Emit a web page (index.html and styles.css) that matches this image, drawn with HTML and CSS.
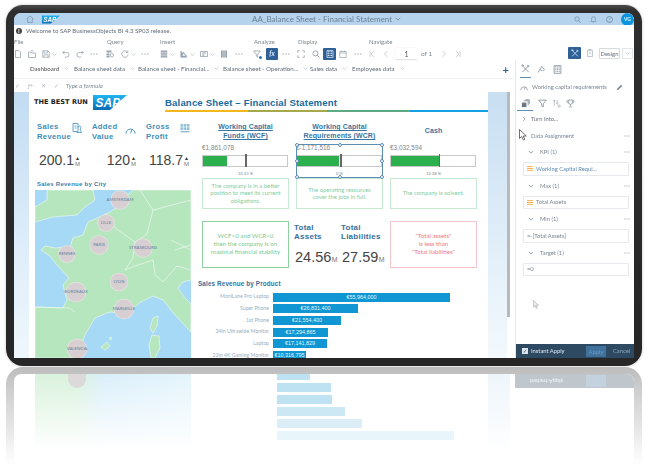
FILE: index.html
```html
<!DOCTYPE html>
<html lang="en">
<head>
<meta charset="utf-8">
<title>AA_Balance Sheet - Financial Statement</title>
<link rel="stylesheet" href="styles.css">
</head>
<body>
<svg class="defs" width="0" height="0" aria-hidden="true">
  <defs>
    <linearGradient id="sapg" x1="0" y1="0" x2="0" y2="1"><stop offset="0" stop-color="#1fb6f2"/><stop offset="1" stop-color="#0a6ab5"/></linearGradient>
    <symbol id="chev" viewBox="0 0 8 8"><path d="M1 2.500 4 5.500 7 2.500" fill="none" stroke="currentColor"/></symbol>
    <symbol id="more" viewBox="0 0 8 8"><path d="M.5 4h1.400M3.300 4h1.400M6.100 4h1.400" fill="none" stroke="currentColor"/></symbol>
    <symbol id="doc" viewBox="0 0 8 8"><path d="M1.500.5h3.500l1.500 1.500v5.500h-5z" fill="none" stroke="currentColor" stroke-width=".8"/></symbol>
    <symbol id="open" viewBox="0 0 8 8"><path d="M.5 2h2.500l1 1h3.500v4.500h-7zM3 .8h2.500" fill="none" stroke="currentColor" stroke-width=".8"/></symbol>
    <symbol id="save" viewBox="0 0 8 8"><path d="M.7.7h5l1.600 1.600v5h-6.600zM2 .7v2.300h3.400v-2.300M2 7.300v-2.500h4v2.500" fill="none" stroke="currentColor" stroke-width=".7"/></symbol>
    <symbol id="undo" viewBox="0 0 8 8"><path d="M2.500.8.800 2.500 2.500 4.200M.8 2.500h4a2.300 2.300 0 0 1 0 4.600h-2" fill="none" stroke="currentColor" stroke-width=".8"/></symbol>
    <symbol id="redo" viewBox="0 0 8 8"><path d="M5.500.8 7.200 2.500 5.500 4.200M7.200 2.500h-4a2.300 2.300 0 0 0 0 4.600h2" fill="none" stroke="currentColor" stroke-width=".8"/></symbol>
    <symbol id="query" viewBox="0 0 8 8"><path d="M.5.500h5v2h-5zM.5 3.500h3v2h-3zM.5 6h3v1.500h-3z" fill="currentColor"/><circle cx="5.800" cy="5.200" r="1.700" fill="none" stroke="currentColor" stroke-width=".8"/></symbol>
    <symbol id="refresh" viewBox="0 0 8 8"><path d="M6.600 2.200a3.200 3.200 0 1 0 .5 2.600M6.800.6v1.900h-1.900" fill="none" stroke="currentColor" stroke-width=".8"/></symbol>
    <symbol id="table" viewBox="0 0 8 8"><path d="M.8.500h6.400v7h-6.400z" fill="currentColor"/><path d="M.8 2.300h6.400M.8 4h6.400M.8 5.700h6.400" stroke="#fff" stroke-width=".5"/></symbol>
    <symbol id="chart" viewBox="0 0 8 8"><path d="M.8 1v6.200h6.400M2 6l1.500-4 1.500 2.500 1.800 1.500z" fill="currentColor" stroke="currentColor" stroke-width=".6"/></symbol>
    <symbol id="img" viewBox="0 0 8 8"><path d="M.5 1.500h7v5h-7z" fill="none" stroke="currentColor" stroke-width=".8"/><path d="M2 3h4M2 5h2.500" stroke="currentColor"/></symbol>
    <symbol id="cols" viewBox="0 0 8 8"><path d="M1 .5h6v7h-6z" fill="currentColor"/><path d="M3 .5v7M5 .5v7" stroke="#fff" stroke-width=".5"/></symbol>
    <symbol id="filter" viewBox="0 0 8 8"><path d="M.6 1h6.800l-2.700 3.200v2.800l-1.400-.8v-2z" fill="none" stroke="currentColor" stroke-width=".8"/></symbol>
    <symbol id="frame" viewBox="0 0 8 8"><path d="M.7 2.700v-2h2M5.300.7h2v2M7.300 5.300v2h-2M2.700 7.300h-2v-2" fill="none" stroke="currentColor" stroke-width=".8"/></symbol>
    <symbol id="search" viewBox="0 0 8 8"><circle cx="3.400" cy="3.400" r="2.500" fill="none" stroke="currentColor" stroke-width=".9"/><path d="M5.200 5.200 7.500 7.500" stroke="currentColor"/></symbol>
    <symbol id="calc" viewBox="0 0 8 8"><path d="M1 .6h6v6.800h-6z" fill="none" stroke="currentColor" stroke-width=".8"/><path d="M2 1.800h4M2 3.700h4M2 5.500h4" stroke="currentColor" stroke-dasharray="1 .5"/></symbol>
    <symbol id="cal" viewBox="0 0 8 8"><path d="M.8 1.500h6.400v6h-6.400zM.8 3h6.400M2.400.5v1.500M5.600.5v1.500" fill="none" stroke="currentColor" stroke-width=".7"/></symbol>
    <symbol id="first" viewBox="0 0 8 8"><path d="M2 1v6M6 1 3 4l3 3" fill="none" stroke="currentColor" stroke-width=".8"/></symbol>
    <symbol id="prev" viewBox="0 0 8 8"><path d="M5.500 1 2.500 4l3 3" fill="none" stroke="currentColor" stroke-width=".8"/></symbol>
    <symbol id="next" viewBox="0 0 8 8"><path d="M2.500 1l3 3-3 3" fill="none" stroke="currentColor" stroke-width=".8"/></symbol>
    <symbol id="last" viewBox="0 0 8 8"><path d="M6 1v6M2 1l3 3-3 3" fill="none" stroke="currentColor" stroke-width=".8"/></symbol>
    <symbol id="tools" viewBox="0 0 10 10"><path d="M1 1.500 8.500 9M9 1.500 1.500 9M1 1l2 .5-1 1zM7.500 1a1.500 1.500 0 0 0 1.500 2" fill="none" stroke="currentColor" stroke-width="1"/></symbol>
    <symbol id="paint" viewBox="0 0 10 10"><path d="M1 8.500 5 2l3.500 3-2 1.500M5 2l1-1M3 5l3 1.500" fill="none" stroke="currentColor" stroke-width=".9"/></symbol>
    <symbol id="clip" viewBox="0 0 8 10"><path d="M1 1.500h6v8h-6zM2.800 1.500v-1h2.400v1" fill="none" stroke="currentColor" stroke-width=".8"/><path d="M2.500 4h3M2.500 6h3" stroke="currentColor" stroke-width=".6"/></symbol>
    <symbol id="gauge" viewBox="0 0 12 10"><path d="M1 9a5 5 0 1 1 10 0M6 8.500 8 4" fill="none" stroke="currentColor" stroke-width="1"/></symbol>
    <symbol id="pencil" viewBox="0 0 8 8"><path d="M.8 7.200 1.300 5.300 5.800.8l1.400 1.400-4.500 4.500z" fill="currentColor"/></symbol>
    <symbol id="measure" viewBox="0 0 8 6"><path d="M0 .5h8M0 3h8M0 5.500h8" stroke="#f0a030" stroke-width="1.100"/></symbol>
    <symbol id="trophy" viewBox="0 0 10 10"><path d="M3 1h4v3a2 2 0 0 1-4 0zM3 2H1v1a2 2 0 0 0 2 1.500M7 2h2v1a2 2 0 0 1-2 1.500M5 6v2M3.500 8.800h3" fill="none" stroke="currentColor" stroke-width=".9"/></symbol>
    <symbol id="data" viewBox="0 0 10 10"><path d="M1 4h5v5h-5z" fill="currentColor"/><path d="M3 2h5v5M5 .8h4.200v4.500" fill="none" stroke="currentColor" stroke-width=".8"/></symbol>
    <symbol id="sort" viewBox="0 0 12 12"><path d="M3 9V1.500M1.500 3 3 1.500 4.500 3M7 1.500V7M5.800 5.800 7 7l1.200-1.200" fill="none" stroke="currentColor" stroke-width=".8"/><circle cx="9.500" cy="9.500" r="1.600" fill="none" stroke="currentColor" stroke-width=".7"/></symbol>
    <symbol id="map" viewBox="0 0 156 168" preserveAspectRatio="none">
      <rect width="156" height="168" fill="#a5d9f6"/>
      <g fill="#b5e6bd" stroke="#e9f6ee" stroke-width=".7">
        <path d="M12 0H58L60 10 50 17 42 25 18 27 0 32V17L12 10Z"/>
        <path d="M98 0H156V90L148 92 143 98 150 108 156 114V142L140 125 128 110 118 106 106 112 98 118 88 124 76 122 72 123 60 128 50 145 46 155 42 168H0V117L28 118 32 110 28 95 34 88 22 75 15 66 6 60 10 56 20 58 35 57 38 48 48 45 53 32 60 29 75 22 85 15 90 8Z"/>
        <path d="M118 128 123 126 122 136 118 143 115 138Z"/>
        <path d="M117 145 124 146 125 158 120 168H116L114 155Z"/>
        <path d="M66 157 72 152 75 156 70 160Z"/>
        <path d="M74 148 76 147 77 149 75 150Z"/>
      </g>
      <path d="M70 23 80 38 100 52M100 52 98 68 90 80 100 76 118 70 120 85 128 92 142 76 156 80M100 52 112 44 118 20 105 0M0 117 34 118 40 122M118 20 156 10M140 60 156 55M136 50 156 60" fill="none" stroke="#eef8f1" stroke-width=".7"/>
    </symbol>
  </defs>
</svg>

<main class="device">
  <div class="screen">
    <header class="titlebar">
      <svg class="ic-home" viewBox="0 0 8 8"><path d="M.5 4 4 1l3.500 3M1.700 3.500v4h4.600v-4" fill="none" stroke="currentColor" stroke-width=".8"/></svg>
      <svg class="sap-small" viewBox="0 0 34 15"><polygon points="0,0 34,0 17,15 0,15" fill="url(#sapg)"/><text x="2.500" y="12" class="sap-text">SAP</text></svg>
      <div class="doc-title">AA_Balance Sheet - Financial Statement <svg class="ic6"><use href="#chev"/></svg></div>
      <div class="shell-right">
        <svg class="ic7"><use href="#search"/></svg>
        <svg class="ic7 bell" viewBox="0 0 8 8"><path d="M1 6.300h6L6.200 5V3a2.200 2.200 0 0 0-4.400 0v2zM3.300 7.300h1.400" fill="none" stroke="currentColor" stroke-width=".8"/></svg>
        <span class="help">?</span>
        <span class="avatar">VG</span>
      </div>
    </header>

    <div class="notice"><span class="info">i</span>Welcome to SAP BusinessObjects BI 4.3 SP03 release.</div>

    <div class="toolbar">
      <section class="group g-file">
        <div class="g-label">File</div>
        <div class="g-icons">
          <svg class="ic"><use href="#doc"/></svg><svg class="ic"><use href="#open"/></svg><svg class="ic"><use href="#save"/></svg><svg class="chv"><use href="#chev"/></svg><svg class="ic"><use href="#undo"/></svg><svg class="ic"><use href="#redo"/></svg><svg class="ic"><use href="#more"/></svg>
        </div>
      </section>
      <section class="group g-query">
        <div class="g-label">Query</div>
        <div class="g-icons">
          <svg class="ic"><use href="#query"/></svg><svg class="ic"><use href="#refresh"/></svg><svg class="chv"><use href="#chev"/></svg><svg class="ic"><use href="#more"/></svg>
        </div>
      </section>
      <section class="group g-insert">
        <div class="g-label">Insert</div>
        <div class="g-icons">
          <svg class="ic"><use href="#table"/></svg><svg class="chv"><use href="#chev"/></svg><svg class="ic"><use href="#chart"/></svg><svg class="chv"><use href="#chev"/></svg><svg class="ic"><use href="#img"/></svg><svg class="chv"><use href="#chev"/></svg><svg class="ic"><use href="#cols"/></svg><svg class="ic"><use href="#more"/></svg>
        </div>
      </section>
      <section class="group g-analyze">
        <div class="g-label">Analyze</div>
        <div class="g-icons">
          <span class="filter-wrap"><svg class="ic"><use href="#filter"/></svg><i class="dot"></i></span><span class="tbtn fx">fx</span><svg class="ic"><use href="#more"/></svg>
        </div>
      </section>
      <section class="group g-display">
        <div class="g-label">Display</div>
        <div class="g-icons">
          <svg class="ic"><use href="#frame"/></svg><svg class="ic"><use href="#search"/></svg><span class="tbtn calc"><svg class="ic"><use href="#calc"/></svg></span><svg class="ic"><use href="#cal"/></svg><svg class="ic"><use href="#more"/></svg>
        </div>
      </section>
      <section class="group g-nav">
        <div class="g-label">Navigate</div>
        <div class="g-icons">
          <svg class="ic"><use href="#first"/></svg><svg class="ic"><use href="#prev"/></svg><span class="page-input">1</span><span class="of">of 1</span><svg class="ic"><use href="#next"/></svg><svg class="ic"><use href="#last"/></svg>
        </div>
      </section>
      <div class="tool-right">
        <span class="tbtn tool"><svg class="ic"><use href="#tools"/></svg></span>
        <svg class="ic"><use href="#clip"/></svg>
        <span class="design">Design</span>
        <span class="design-ch"><svg class="chv"><use href="#chev"/></svg></span>
      </div>
    </div>

    <div class="workspace">
      <div class="report">
        <nav class="tabs">
          <span class="tab t1 active">Dashboard<svg class="chv"><use href="#chev"/></svg></span>
          <span class="tab t2">Balance sheet data<svg class="chv"><use href="#chev"/></svg></span>
          <span class="tab t3">Balance sheet - Financial...<svg class="chv"><use href="#chev"/></svg></span>
          <span class="tab t4">Balance sheet - Operation...<svg class="chv"><use href="#chev"/></svg></span>
          <span class="tab t5">Sales data<svg class="chv"><use href="#chev"/></svg></span>
          <span class="tab t6">Employees data<svg class="chv"><use href="#chev"/></svg></span>
          <span class="plus">+</span>
        </nav>
        <div class="formula">
          <span class="f-ico">✓</span><span class="f-ico">ƒ+</span><span class="f-ico">✕</span><span class="f-ico">✓</span>
          <span class="f-input">Type a formula</span>
        </div>
        <div class="canvas">
          <div class="strip-l"></div>
          <div class="page">
            <div class="page-head">
              <div class="brand">
                <span class="run">THE BEST RUN</span>
                <svg class="sap-big" viewBox="0 0 34 15"><polygon points="0,0 34,0 17,15 0,15" fill="url(#sapg)"/><text x="2.500" y="12" class="sap-text">SAP</text></svg>
              </div>
              <div class="head-title">
                <h1>Balance Sheet – Financial Statement</h1>
                <div class="rule"><i class="r1"></i><i class="r2"></i><i class="r3"></i><i class="r4"></i></div>
              </div>
            </div>
            <div class="page-body">
              <div class="col-left">
                <div class="kpis">
                  <div class="kpi k1">
                    <div class="kpi-head"><span>Sales<br>Revenue</span><svg class="kpi-ic" viewBox="0 0 10 11"><path d="M1 .5h5v8h-5zM2.500 3h2M2.500 5h2M6 4.500a1.500 1.500 0 1 1 2 1.500l1.500 3.500h-5" fill="none" stroke="currentColor" stroke-width=".8"/></svg></div>
                    <div class="kpi-val">200.1<span class="unit"><b>▲</b>M</span></div>
                  </div>
                  <div class="kpi k2">
                    <div class="kpi-head"><span>Added<br>Value</span><svg class="kpi-ic" viewBox="0 0 12 10"><use href="#gauge"/></svg></div>
                    <div class="kpi-val">120<span class="unit"><b>▲</b>M</span></div>
                  </div>
                  <div class="kpi k3">
                    <div class="kpi-head"><span>Gross<br>Profit</span><svg class="kpi-ic" viewBox="0 0 10 10"><path d="M.5 1h9v6h-9z" fill="currentColor" opacity=".55"/><path d="M.5 4h9M3.500 1v6M6.500 1v6M1 8.800h8" stroke="#fff" stroke-width=".6"/><path d="M.5 8.800h9" stroke="currentColor" stroke-width=".8"/></svg></div>
                    <div class="kpi-val">118.7<span class="unit"><b>▲</b>M</span></div>
                  </div>
                </div>
                <h2 class="sec">Sales Revenue by City</h2>
                <div class="map">
                  <svg class="map-bg"><use href="#map"/></svg>
                  <span class="pin p-ams">AMSTERDAM</span>
                  <span class="pin p-lil">LILLE</span>
                  <span class="pin p-par">PARIS</span>
                  <span class="pin p-ren">RENNES</span>
                  <span class="pin p-str">STRASBOURG</span>
                  <span class="pin p-lyo">LYON</span>
                  <span class="pin p-bor">BORDEAUX</span>
                  <span class="pin p-mar">MARSEILLE</span>
                  <span class="pin p-val">VALENCIA</span>
                </div>
              </div>
              <div class="col-right">
                <div class="gauges">
                  <article class="gauge">
                    <h3><u>Working Capital<br>Funds (WCF)</u></h3>
                    <div class="g-val">€1,861,078</div>
                    <div class="g-bar"><i class="g-fill" style="width:24px"></i><i class="g-mark"></i></div>
                    <div class="g-pct">33.33 %</div>
                    <div class="g-msg">The company is in a better position to meet its current obligations.</div>
                  </article>
                  <article class="gauge sel">
                    <h3><u>Working Capital<br>Requirements (WCR)</u></h3>
                    <div class="g-val">€-1,171,516</div>
                    <div class="g-bar mid"><i class="g-fill" style="width:42px"></i><i class="g-mark"></i></div>
                    <div class="g-pct">0 %</div>
                    <div class="g-msg">The operating resources cover the jobs in full.</div>
                    <div class="selection"><i class="h h1"></i><i class="h h2"></i><i class="h h3"></i><i class="h h4"></i><i class="h h5"></i><i class="h h6"></i><i class="h h7"></i><i class="h h8"></i></div>
                  </article>
                  <article class="gauge">
                    <h3 class="plain">Cash</h3>
                    <div class="g-val">€3,032,594</div>
                    <div class="g-bar end"><i class="g-fill" style="width:48px"></i><i class="g-mark"></i></div>
                    <div class="g-pct">12.28 %</div>
                    <div class="g-msg">The company is solvent.</div>
                  </article>
                </div>
                <div class="totals">
                  <div class="box good">WCF&gt;0 and WCR&lt;0<br>then the company is on<br>maximal financial stability</div>
                  <div class="tot-pair">
                    <div class="tot"><h4>Total<br>Assets</h4><div class="tot-val">24.56<small>M</small></div></div>
                    <div class="tot"><h4>Total<br>Liabilities</h4><div class="tot-val">27.59<small>M</small></div></div>
                  </div>
                  <div class="box bad">"Total assets"<br>is less than<br>"Total liabilities"</div>
                </div>
                <h2 class="sec prod">Sales Revenue by Product</h2>
                <div class="bars">
                  <div class="bar-row"><span class="b-lab">MoniLane Pro Laptop</span><span class="b-bar" style="width:177px">€55,964,000</span></div>
                  <div class="bar-row"><span class="b-lab">Super Phone</span><span class="b-bar" style="width:85px">€26,831,400</span></div>
                  <div class="bar-row"><span class="b-lab">1st Phone</span><span class="b-bar" style="width:68px">€21,554,400</span></div>
                  <div class="bar-row"><span class="b-lab">34in Ultrawide Monitor</span><span class="b-bar" style="width:55px">€17,294,865</span></div>
                  <div class="bar-row"><span class="b-lab">Laptop</span><span class="b-bar" style="width:54px">€17,141,829</span></div>
                  <div class="bar-row"><span class="b-lab">22in 4K Gaming Monitor</span><span class="b-bar" style="width:33px">€10,316,795</span></div>
                </div>
              </div>
            </div>
          </div>
          <div class="strip-r"></div>
          <div class="scroll"><i></i></div>
        </div>
      </div>

      <aside class="panel">
        <div class="p-tabs">
          <span class="p-tab on"><svg class="ic9"><use href="#tools"/></svg></span>
          <span class="p-tab"><svg class="ic9"><use href="#paint"/></svg></span>
          <span class="p-tab"><svg class="ic9"><use href="#calc"/></svg></span>
        </div>
        <div class="p-name"><svg class="ic8"><use href="#gauge"/></svg><span>Working capital requirements</span><svg class="ic7"><use href="#pencil"/></svg></div>
        <div class="p-subtabs">
          <span class="p-sub on"><svg class="ic9"><use href="#data"/></svg></span>
          <span class="p-sub"><svg class="ic9"><use href="#filter"/></svg></span>
          <span class="p-sub"><svg class="ic9"><use href="#sort"/></svg></span>
          <span class="p-sub"><svg class="ic9"><use href="#trophy"/></svg></span>
        </div>
        <div class="p-turn"><svg class="ic6"><use href="#next"/></svg>Turn Into...</div>
        <div class="p-assign"><span>Data Assignment</span><svg class="ic6"><use href="#more"/></svg></div>
        <div class="p-label"><svg class="ic6"><use href="#chev"/></svg><span>KPI (1)</span><svg class="ic6"><use href="#more"/></svg></div>
        <div class="p-field link"><svg class="ms"><use href="#measure"/></svg>Working Capital Requi...</div>
        <div class="p-label"><svg class="ic6"><use href="#chev"/></svg><span>Max (1)</span><svg class="ic6"><use href="#more"/></svg></div>
        <div class="p-field"><svg class="ms"><use href="#measure"/></svg>Total Assets</div>
        <div class="p-label"><svg class="ic6"><use href="#chev"/></svg><span>Min (1)</span><svg class="ic6"><use href="#more"/></svg></div>
        <div class="p-field">=-[Total Assets]</div>
        <div class="p-label"><svg class="ic6"><use href="#chev"/></svg><span>Target (1)</span><svg class="ic6"><use href="#more"/></svg></div>
        <div class="p-field">=0</div>
        <div class="p-foot">
          <span class="check">✓</span><span class="inst">Instant Apply</span>
          <span class="apply">Apply</span><span class="cancel">Cancel</span>
        </div>
        <svg class="cursor c1" viewBox="0 0 8 12"><path d="M.5.500v9l2.300-2 1.500 3.500 1.500-.7-1.500-3.300h3z" fill="#fff" stroke="#333" stroke-width=".7"/></svg>
        <svg class="cursor c2" viewBox="0 0 8 12"><path d="M.5.500v9l2.300-2 1.500 3.500 1.500-.7-1.500-3.300h3z" fill="#eee" stroke="#999" stroke-width=".7"/></svg>
      </aside>
    </div>
  </div>
</main>

<div class="reflection">
  <div class="r-screen">
    <div class="r-mapbox"><i class="r-pin"></i></div>
    <div class="r-bars">
      <i style="width:33px"></i><i style="width:54px"></i><i style="width:55px"></i><i style="width:68px"></i><i style="width:85px"></i><i style="width:177px"></i>
    </div>
    <div class="r-strip"></div>
    <div class="r-panel"><span class="r-text">Instant Apply</span><span class="r-apply"></span></div>
  </div>
</div>
</body>
</html>
```

FILE: styles.css
```css
* { box-sizing: border-box; }
html, body { margin: 0; padding: 0; }
body {
  width: 650px; height: 468px; overflow: hidden; background: #fff;
  font-family: "Lato", "Open Sans", sans-serif; color: #66737e; font-size: 6.5px; line-height: 1;
}
.defs { position: absolute; }
svg { display: block; flex: none; }
h1, h2, h3, h4 { margin: 0; font-weight: 700; }
.device {
  margin: 5px 0 0 6px; width: 636px; height: 361px; padding: 8px;
  background: linear-gradient(#4a4a4a, #2e2e2e 6px, #262626); border-radius: 17px;
  box-shadow: 0 0 3px rgba(0,0,0,.25); filter: blur(.5px);
}
.screen { height: 345px; background: #fff; border-radius: 7px 7px 0 0; overflow: hidden; display: flex; flex-direction: column; }

.titlebar { height: 12px; background: #b5d3ec; display: flex; align-items: center; padding-left: 12px; color: #7d97ad; flex: none; }
.ic-home { width: 8px; height: 8px; }
.sap-small { width: 18px; height: 9px; margin-left: 8px; }
.sap-text { font: italic 700 12px "Liberation Sans", sans-serif; fill: #fff; }
.doc-title { margin-left: 192px; font-size: 8px; color: #6b8296; display: flex; align-items: center; gap: 3px; white-space: nowrap; }
.ic6 { width: 6px; height: 6px; }
.ic7 { width: 7px; height: 7px; }
.ic8 { width: 8px; height: 7px; }
.ic9 { width: 9px; height: 9px; }
.shell-right { margin-left: auto; display: flex; align-items: center; gap: 9px; color: #7d97ad; }
.help { width: 7px; height: 7px; border: .7px solid currentColor; border-radius: 50%; font-size: 5px; line-height: 6px; text-align: center; }
.avatar { width: 13px; height: 13px; margin-left: -1px; border-radius: 50%; background: #0a94dd; color: #dff3fb; font-size: 5px; font-weight: 700; line-height: 13px; text-align: center; }

.notice { height: 12px; flex: none; display: flex; align-items: center; gap: 4px; padding-left: 2px; font-size: 6.1px; color: #606d78; background: #fff; }
.info { width: 6px; height: 6px; border-radius: 50%; background: #444; color: #fff; font-size: 5px; line-height: 6px; text-align: center; font-weight: 700; }

.toolbar { height: 23px; flex: none; display: flex; align-items: flex-start; color: #98a3ad; }
.group { flex: none; padding-top: 1px; }
.g-label { height: 8px; line-height: 8px; font-size: 6px; color: #7c8791; }
.g-icons { display: flex; align-items: center; gap: 7px; height: 14px; margin-top: 1px; }
.g-icons .ic, .tool-right .ic { width: 8px; height: 8px; }
.chv { width: 5px; height: 5px; color: #aab3bb; margin-left: -5px; margin-right: -2px; }
.g-file { width: 93px; }
.g-file .g-icons { gap: 6px; }
.g-file .chv { margin-left: -4px; margin-right: -1px; }
.g-query { width: 53px; }
.g-query .g-icons { margin-left: -1px; }
.g-insert { width: 94px; }
.g-analyze { width: 44px; }
.g-analyze .g-icons { gap: 5px; margin-left: -1px; }
.filter-wrap { position: relative; display: block; width: 8px; }
.dot { position: absolute; right: -1px; bottom: -1px; width: 3px; height: 3px; border-radius: 50%; background: #2b78b8; }
.tbtn { display: flex; align-items: center; justify-content: center; background: #2f6096; color: #dbe9f5; height: 12px; border-radius: 1px; }
.fx { width: 12px; font-style: italic; font-weight: 700; font-size: 6.5px; margin-right: -1px; }
.g-display { width: 71px; }
.g-display .g-icons { margin-left: -1px; }
.calc { width: 13px; margin: 0 -4px; }
.g-nav { color: #c0c7cd; }
.g-nav .g-icons { gap: 6px; margin-left: -1px; }
.page-input { width: 21px; height: 12px; line-height: 12px; text-align: center; color: #555; border-bottom: 1px solid #e3e6e9; box-shadow: 0 0 1px #ddd; font-size: 7px; }
.of { color: #7c8791; margin-left: -2px; margin-right: 2px; }
.tool-right { margin-left: auto; height: 23px; display: flex; align-items: center; gap: 5px; padding-top: 9px; padding-right: 1px; }
.tool { width: 13px; }
.design { width: 21px; height: 11px; line-height: 10px; text-align: center; border: .7px solid #d5dade; color: #66737e; border-radius: 1px; font-size: 6px; }
.design-ch { width: 11px; height: 11px; margin-left: -3px; border: .7px solid #e3e6e9; display: flex; align-items: center; justify-content: center; }
.design-ch .chv { margin: 0; }

.workspace { flex: 1; min-height: 0; display: flex; }
.report { width: 500px; flex: none; display: flex; flex-direction: column; min-height: 0; }
.tabs { height: 18px; flex: none; display: flex; align-items: center; padding-left: 16px; font-size: 6.2px; color: #606d78; }
.tab { display: flex; align-items: center; gap: 5px; white-space: nowrap; }
.tab .chv { margin: 0; }
.t1 { width: 44px; color: #4c4c4c; }
.t2 { width: 64px; }
.t3 { width: 85px; }
.t4 { width: 87px; }
.t5 { width: 42px; }
.t6 { width: 60px; }
.plus { margin-left: auto; margin-right: 5px; font-size: 11px; color: #2f6096; font-weight: 700; }
.formula { height: 14px; flex: none; display: flex; align-items: center; gap: 7px; padding-left: 1px; color: #b0b8bf; font-size: 6px; border-top: .5px solid #eef0f2; }
.f-input { font-style: italic; color: #7b8894; margin-left: -3px; padding-left: 2px; flex: 1; }
.f-ico { width: 6px; }

.canvas { flex: 1; min-height: 0; display: flex; overflow: hidden; }
.strip-l { width: 15px; flex: none; background: linear-gradient(#c3dcf2, #dfeefa 60%, #eef7fc); }
.page { width: 459px; flex: none; background: #fff; display: flex; flex-direction: column; }
.strip-r { width: 19px; flex: none; background: linear-gradient(#c8def1, #e2eff9 60%, #f3f9fd); }
.scroll { width: 3px; flex: none; }
.scroll i { display: block; height: 225px; background: #b7b9bb; }

.page-head { height: 20px; flex: none; display: flex; }
.brand { width: 136px; flex: none; display: flex; align-items: center; gap: 4px; padding-left: 5px; }
.run { font: 700 6.6px "DejaVu Sans", sans-serif; color: #1c1c1c; white-space: nowrap; width: 55px; }
.sap-big { width: 34px; height: 15px; margin-top: 1px; }
.head-title { flex: 1; display: flex; flex-direction: column; }
h1 { font: 700 9.6px "Liberation Sans", sans-serif; color: #1a6b9e; height: 18px; line-height: 22px; white-space: nowrap; letter-spacing: .15px; }
.rule { height: 2px; display: flex; }
.rule i { display: block; height: 2px; }
.r1 { width: 83px; background: #f5b81c; }
.r2 { width: 79px; background: #a5a94a; }
.r3 { width: 83px; background: #5cab84; }
.r4 { flex: 1; background: #15a0e6; }

.page-body { flex: 1; min-height: 0; display: flex; overflow: hidden; }
.col-left { width: 167px; flex: none; padding-left: 6px; }
.kpis { height: 59px; padding: 10px 0 0 2px; display: grid; grid-template-columns: 55px 54px 44px; }
.kpi-head { height: 18px; display: flex; font: 700 7.6px/9.500px "Liberation Sans", sans-serif; color: #3f8db8; letter-spacing: .35px; }
.kpi-ic { color: #3f8db8; }
.k1 .kpi-ic { width: 10px; height: 11px; margin: 1px 0 0 1px; }
.k2 .kpi-ic { width: 11px; height: 10px; margin: 3px 0 0 8px; }
.k3 .kpi-ic { width: 10px; height: 10px; margin: 1px 0 0 10px; }
.kpi-val { display: flex; justify-content: flex-end; align-items: flex-end; margin-top: 13px; font: 400 14px/14px "Liberation Sans", sans-serif; color: #444; }
.k1 .kpi-val { padding-right: 12px; }
.k2 .kpi-val { padding-right: 10px; }
.k3 .kpi-val { padding-right: 1px; }
.unit { display: flex; flex-direction: column; align-items: center; font-size: 6px; line-height: 6px; color: #777; margin-left: 1px; }
.unit b { font-size: 5px; line-height: 5px; color: #333; }
.sec { font: 700 6px/9px "Liberation Sans", sans-serif; color: #3f80a8; letter-spacing: .25px; }
.col-left .sec { padding-left: 2px; margin-top: 9px; }
.map { position: relative; width: 156px; height: 168px; margin-top: 1px; overflow: hidden; }
.map-bg { width: 156px; height: 168px; }
.pin { position: absolute; display: flex; align-items: center; justify-content: center; border-radius: 50%; background: #d8cfd2; box-shadow: 0 0 0 .7px #e8e3e4; color: #5e7f9e; font-size: 4.3px; white-space: nowrap; transform: translate(-50%,-50%); }
.p-ams { left: 85px; top: 10px; width: 18px; height: 18px; }
.p-lil { left: 71px; top: 33px; width: 16px; height: 16px; }
.p-par { left: 64px; top: 55px; width: 18px; height: 18px; }
.p-ren { left: 32px; top: 64px; width: 16px; height: 16px; }
.p-str { left: 108px; top: 58px; width: 18px; height: 18px; }
.p-lyo { left: 84px; top: 92px; width: 17px; height: 17px; }
.p-bor { left: 41px; top: 102px; width: 19px; height: 19px; }
.p-mar { left: 89px; top: 119px; width: 19px; height: 19px; }
.p-val { left: 42px; top: 159px; width: 19px; height: 19px; }

.col-right { flex: 1; padding-left: 6px; }
.gauges { display: grid; grid-template-columns: 87px 87px 87px; gap: 7px; padding-top: 10px; }
.gauge { position: relative; }
.gauge h3 { height: 18px; font: 700 7px/9px "Liberation Sans", sans-serif; color: #3a74a0; text-align: center; letter-spacing: .1px; }
.gauge h3.plain { line-height: 18px; }
.g-val { margin-top: 3.500px; height: 8px; color: #858585; font: 400 6.400px/8px "Liberation Sans", sans-serif; }
.g-bar { position: relative; height: 12px; margin-top: 3px; width: 86px; border: .7px solid #c9c9c9; box-shadow: inset 0 0 1px #ddd; }
.g-fill { display: block; height: 100%; background: #2cb04e; }
.g-mark { position: absolute; left: 42px; top: -1.500px; bottom: -1.500px; width: 1.500px; background: #666; }
.mid .g-mark { left: 43px; }
.end .g-mark { left: 47.500px; }
.g-pct { height: 8px; margin-top: 3px; text-align: center; font-size: 4.2px; line-height: 8px; color: #888; }
.g-msg { height: 31px; display: flex; align-items: center; justify-content: center; text-align: center; padding: 0 5px; border: 1px solid #c6e9d2; color: #85cda0; font: 400 5.900px/7.500px "Lato", sans-serif; }
.selection { position: absolute; left: 0; right: 0; top: 22px; bottom: 31px; border: .7px solid #5d8db3; pointer-events: none; }
.h { position: absolute; width: 4px; height: 4px; border-radius: 50%; background: #fff; border: .7px solid #5d8db3; }
.h1 { left: -2px; top: -2px; } .h2 { left: calc(50% - 2px); top: -2px; } .h3 { right: -2px; top: -2px; }
.h4 { left: -2px; top: calc(50% - 2px); } .h5 { right: -2px; top: calc(50% - 2px); }
.h6 { left: -2px; bottom: -2px; } .h7 { left: calc(50% - 2px); bottom: -2px; } .h8 { right: -2px; bottom: -2px; }

.totals { display: grid; grid-template-columns: 87px 87px 87px; gap: 7px; margin-top: 12px; height: 47px; }
.box { display: flex; align-items: center; justify-content: center; text-align: center; font: 400 6.200px/7.700px "Lato", sans-serif; }
.box.good { border: 1px solid #8fd09f; color: #78ca92; }
.box.bad { border: 1px solid #f5c4c8; color: #ec7a82; }
.tot-pair { display: grid; grid-template-columns: 47px 47px; margin-left: -3px; }
.tot { padding-left: 1px; }
.tot h4 { font: 700 8px/9px "Liberation Sans", sans-serif; color: #386f9c; letter-spacing: .25px; padding-top: 2px; height: 29px; }
.tot-val { display: flex; align-items: flex-end; font: 400 14.500px/15px "Liberation Sans", sans-serif; color: #444; padding-left: 1px; }
.tot-val small { font-size: 7px; line-height: 11px; color: #777; margin-left: .5px; }
.sec.prod { margin: 11.500px 0 0 -4px; font-size: 6.300px; letter-spacing: .15px; color: #386f9c; }
.bars { margin: 4.500px 0 0 -6px; display: flex; flex-direction: column; gap: 2.700px; }
.bar-row { display: flex; align-items: center; height: 9px; flex: none; }
.b-lab { width: 77px; padding-right: 4px; text-align: right; flex: none; white-space: nowrap; font-size: 5.200px; color: #96afc2; }
.b-bar { height: 9px; text-align: center; background: #0f96d3; color: #e8f6fc; font: 400 5.400px/9px "Liberation Sans", sans-serif; white-space: nowrap; overflow: hidden; }

.panel { position: relative; flex: 1; display: flex; flex-direction: column; border-left: .7px solid #e4e7ea; margin-left: 1px; color: #7a8691; min-width: 0; font-size: 5.800px; }
.p-tabs { height: 18px; flex: none; display: flex; align-items: center; gap: 5px; padding-left: 4px; }
.p-tab { width: 11px; height: 18px; display: flex; align-items: center; justify-content: center; color: #8a96a1; }
.p-tab.on { border-bottom: 1px solid #5d8db3; }
.p-name { height: 18px; flex: none; display: flex; align-items: center; gap: 4px; padding-left: 4px; white-space: nowrap; }
.p-name span { width: 80px; }
.p-subtabs { height: 15px; flex: none; display: flex; gap: 4px; padding-left: 1px; }
.p-sub { width: 10px; height: 15px; display: flex; align-items: center; justify-content: center; color: #8a96a1; }
.p-sub.on { width: 16px; border-bottom: 1px solid #5d8db3; color: #6a7682; }
.p-turn { height: 16px; flex: none; display: flex; align-items: center; gap: 4px; padding-left: 5px; color: #66737e; }
.p-assign { height: 18px; flex: none; display: flex; align-items: center; justify-content: space-between; padding: 0 4px 0 15px; }
.p-label { height: 14px; flex: none; display: flex; align-items: center; padding: 0 4px 0 12px; gap: 6px; margin-bottom: 3px; }
.p-label span { flex: 1; }
.p-field { height: 13.500px; flex: none; margin: 0 5px 3px 7px; display: flex; align-items: center; gap: 3px; padding-left: 3px; border: .7px solid #e7eaec; box-shadow: 0 0 1px #eee; border-radius: 1px; }
.p-field.link { color: #5d8ab2; }
.ms { width: 6px; height: 5px; }
.p-foot { margin-top: auto; height: 14px; flex: none; display: flex; align-items: center; background: #2d4a62; padding-left: 6px; color: #dfe8ef; }
.check { width: 6px; height: 6px; background: #dce6ee; color: #2d4a62; font-size: 5px; line-height: 6px; text-align: center; }
.inst { margin-left: 3px; width: 55px; }
.apply { width: 20px; height: 11px; line-height: 11px; text-align: center; background: #3e719c; color: #6f9cc0; }
.cancel { margin-left: 7px; color: #8ea6ba; }
.cursor { position: absolute; }
.c1 { left: 3px; top: 69px; width: 8px; height: 12px; }
.c2 { left: 17px; top: 240px; width: 6px; height: 9px; }

.reflection {
  margin: 1px 0 0 6px; width: 636px; height: 97px; padding: 7px 8px 0;
  background: linear-gradient(#bcbcbc, #cfcfcf 25%, #e4e4e4 60%, #fdfdfd 97%); border-radius: 17px 17px 0 0;
  filter: blur(.6px);
}
.r-screen { height: 90px; background: #fff; border-radius: 7px 7px 0 0; position: relative; overflow: hidden; }
.r-mapbox { position: absolute; left: 21px; top: 0; width: 156px; height: 76px; background: linear-gradient(rgba(255,255,255,.1), #fff), linear-gradient(90deg, #d5f0d9 0 25%, #d6edfa 45%, #e2f3fb 100%); }
.r-pin { position: absolute; left: 33px; top: 0; width: 18px; height: 14px; border-radius: 0 0 9px 9px; background: #dcd9da; }
.r-bars { position: absolute; left: 263px; top: 0; display: flex; flex-direction: column; gap: 3px; }
.r-bars i { display: block; height: 9px; background: #bfe2f2; }
.r-bars i:first-child { height: 6px; }
.r-bars i:nth-child(4) { background: #cde8f5; }
.r-bars i:nth-child(5) { background: #dbeef8; }
.r-bars i:nth-child(6) { background: #e8f5fb; }
.r-strip { position: absolute; left: 474px; top: 0; width: 22px; height: 80px; background: linear-gradient(#eef5fb, #fff); }
.r-panel { position: absolute; right: 0; top: 0; width: 119px; height: 14px; background: #bfc7cd; color: #f4f6f8; font-size: 5.800px; padding: 4px 0 0 15px; }
.r-text { display: block; transform: scaleY(-1); }
.r-apply { position: absolute; left: 71px; top: 1px; width: 20px; height: 12px; background: #c3d2de; }
```
